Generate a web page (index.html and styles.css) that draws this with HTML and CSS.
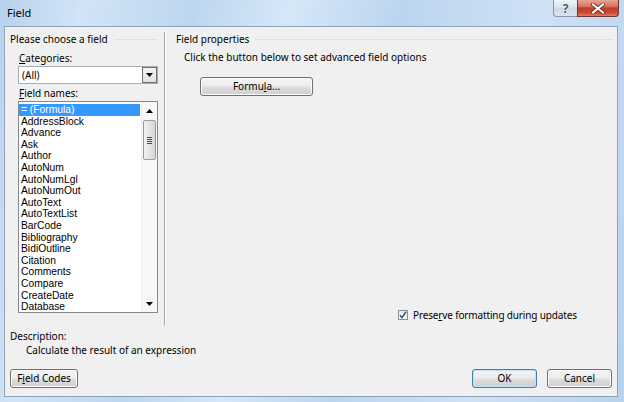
FILE: index.html
```html
<!DOCTYPE html>
<html>
<head>
<meta charset="utf-8">
<link rel="stylesheet" href="styles.css">
</head>
<body>
<div class="window">
  <div class="titlebar">
    <span class="title">Field</span>
    <div class="caption">
      <div class="cap-btn help"><span>?</span></div>
      <div class="cap-btn close">
        <svg width="14" height="11" viewBox="0 0 14 11"><path d="M2 1.5 L12 9.5 M12 1.5 L2 9.5" stroke="#5a2a22" stroke-width="3.6" stroke-linecap="square"/><path d="M2 1.5 L12 9.5 M12 1.5 L2 9.5" stroke="#ffffff" stroke-width="2" stroke-linecap="square"/></svg>
      </div>
    </div>
  </div>
  <div class="client">
    <div class="main">
      <div class="left">
        <div class="group-title">Please choose a field</div>
        <div class="label"><u>C</u>ategories:</div>
        <div class="select">
          <span class="select-text">(All)</span>
          <span class="drop"><svg width="7" height="4" viewBox="0 0 7 4"><path d="M0 0 H7 L3.5 4 Z" fill="#000"/></svg></span>
        </div>
        <div class="label"><u>F</u>ield names:</div>
        <div class="listbox">
          <ul class="items">
            <li class="selected">= (Formula)</li>
            <li>AddressBlock</li>
            <li>Advance</li>
            <li>Ask</li>
            <li>Author</li>
            <li>AutoNum</li>
            <li>AutoNumLgl</li>
            <li>AutoNumOut</li>
            <li>AutoText</li>
            <li>AutoTextList</li>
            <li>BarCode</li>
            <li>Bibliography</li>
            <li>BidiOutline</li>
            <li>Citation</li>
            <li>Comments</li>
            <li>Compare</li>
            <li>CreateDate</li>
            <li>Database</li>
          </ul>
          <div class="vscroll">
            <div class="sb-btn"><svg width="7" height="4" viewBox="0 0 7 4"><path d="M0 4 H7 L3.5 0 Z" fill="#000"/></svg></div>
            <div class="thumb"><span class="grip"></span><span class="grip"></span><span class="grip"></span><span class="grip"></span></div>
            <div class="sb-space"></div>
            <div class="sb-btn"><svg width="7" height="4" viewBox="0 0 7 4"><path d="M0 0 H7 L3.5 4 Z" fill="#000"/></svg></div>
          </div>
        </div>
      </div>
      <div class="sep"></div>
      <div class="right">
        <div class="group-title">Field properties</div>
        <div class="hint">Click the button below to set advanced field options</div>
        <button class="btn formula">Formu<u>l</u>a...</button>
        <div class="check-row">
          <span class="checkbox"><svg width="8" height="8" viewBox="0 0 8 8"><path d="M1 4.2 L3 6.6 L7 0.8" fill="none" stroke="#2f4f96" stroke-width="1.5"/></svg></span>
          <span class="check-label">Prese<u>r</u>ve formatting during updates</span>
        </div>
      </div>
    </div>
    <div class="desc-label">Description:</div>
    <div class="desc-text">Calculate the result of an expression</div>
    <div class="footer">
      <button class="btn codes">F<u>i</u>eld Codes</button>
      <button class="btn ok">OK</button>
      <button class="btn cancel">Cancel</button>
    </div>
  </div>
</div>
</body>
</html>
```
FILE: styles.css
```css
* { box-sizing: border-box; }
html, body { margin: 0; padding: 0; }
body {
  width: 624px;
  height: 402px;
  overflow: hidden;
  font-family: "Noto Sans", "Open Sans", sans-serif;
  font-size: 10px;
  color: #000;
}
.window {
  width: 624px;
  height: 402px;
  display: flex;
  flex-direction: column;
  background: linear-gradient(100deg, #b8d2ed 0%, #d2e4f6 12%, #bdd6ef 28%, #d6e7f8 42%, #bcd5ef 58%, #cfe1f5 78%, #b9d2ed 100%);
}
.titlebar {
  height: 26px;
  display: flex;
  align-items: flex-start;
}
.title {
  padding: 6px 0 0 7px;
  font-size: 11px;
  line-height: 14px;
}
.caption {
  margin-left: auto;
  margin-right: 5px;
  display: flex;
}
.cap-btn {
  height: 17px;
  display: flex;
  align-items: center;
  justify-content: center;
}
.help {
  width: 24px;
  border: 1px solid #8797ab;
  border-top: none;
  border-right: none;
  border-radius: 0 0 0 4px;
  background: linear-gradient(#eef4fa, #dce6f1 45%, #c9d7e7 50%, #d8e4f0);
  color: #4d5968;
  font-size: 12px;
  font-weight: bold;
  text-shadow: 0 0 2px #fff;
}
.close {
  width: 42px;
  border: 1px solid #6b3a35;
  border-top: none;
  border-radius: 0 0 4px 0;
  background: linear-gradient(#e7a493, #d77560 40%, #c23d25 50%, #cd4a31 80%, #e0806a);
}
.client {
  margin: 0 6px 5px 4px;
  flex: 1;
  background: #f0f0f0;
  border: 1px solid #8ea2ba;
  display: flex;
  flex-direction: column;
}
.main {
  height: 299px;
  display: flex;
}
.left {
  width: 159px;
  padding: 5px 6px 0 5px;
  display: flex;
  flex-direction: column;
}
.sep {
  width: 2px;
  margin-top: 5px;
  border-left: 1px solid #a8a8a8;
  border-right: 1px solid #ffffff;
}
.right {
  flex: 1;
  padding: 5px 4px 4px 10px;
  display: flex;
  flex-direction: column;
}
.group-title {
  display: flex;
  align-items: center;
  line-height: 14px;
  white-space: nowrap;
}
.group-title::after {
  content: "";
  flex: 1;
  height: 1px;
  margin-left: 6px;
  background: #dbe1e6;
}
.left .group-title::after { margin-right: 1px; }
.label {
  padding-left: 9px;
  line-height: 14px;
  margin-top: 5px;
}
.label + .listbox { margin-top: 1px; }
.select + .label { margin-top: 2px; }
.select {
  margin: 1px 0 0 8px;
  height: 18px;
  border: 1px solid #abadb3;
  background: #fff;
  display: flex;
  align-items: center;
}
.select-text {
  flex: 1;
  padding-left: 3px;
  line-height: 14px;
}
.drop {
  width: 15px;
  height: 16px;
  border: 1px solid #6f6f6f;
  background: linear-gradient(#f2f2f2, #e2e2e2);
  display: flex;
  align-items: center;
  justify-content: center;
}
.listbox {
  margin-left: 8px;
  height: 212px;
  border: 1px solid #828790;
  background: #fff;
  display: flex;
}
.items {
  flex: 1;
  list-style: none;
  margin: 0;
  padding: 2px 1px 0 0;
  overflow: hidden;
  font-family: "Liberation Sans", Arial, sans-serif;
  font-size: 10.3px;
}
.items li {
  line-height: 11.6px;
  height: 11.6px;
  padding-left: 2px;
  white-space: nowrap;
}
.items li.selected {
  background: #3399ff;
  color: #fff;
}
.vscroll {
  width: 16px;
  display: flex;
  flex-direction: column;
  padding: 0 1px 0 1px;
  background: #f7f7f7;
  border-left: 1px solid #f0f0f0;
}
.sb-btn {
  height: 17px;
  display: flex;
  align-items: center;
  justify-content: center;
}
.thumb {
  height: 40px;
  margin-top: 1px;
  border: 1px solid #9a9a9a;
  border-radius: 2px;
  background: linear-gradient(90deg, #f2f2f2, #e4e4e4 50%, #d6d6d6);
  display: flex;
  flex-direction: column;
  align-items: center;
  justify-content: center;
  gap: 1px;
}
.grip {
  width: 5px;
  height: 1px;
  background: #4d4d4d;
}
.sb-space { flex: 1; }
.hint {
  margin: 4px 0 0 8px;
  line-height: 14px;
}
.btn {
  font: inherit;
  color: #000;
  height: 19px;
  padding: 0;
  border: 1px solid #707070;
  border-radius: 3px;
  background: linear-gradient(#f3f3f3, #ececec 48%, #dddddd 52%, #d0d0d0);
  box-shadow: inset 0 0 0 1px #fbfbfb;
  line-height: 15px;
}
.formula {
  width: 113px;
  margin: 13px 0 0 24px;
  align-self: flex-start;
}
.check-row {
  margin: auto 0 0 222px;
  display: flex;
  align-items: center;
  line-height: 14px;
  white-space: nowrap;
}
.check-label { letter-spacing: -0.15px; }
.checkbox {
  width: 10px;
  height: 10px;
  margin-right: 5px;
  border: 1px solid #8e8f8f;
  background: linear-gradient(#e9e9e9, #fdfdfd);
  display: flex;
  align-items: center;
  justify-content: center;
}
.desc-label {
  margin-top: 3px;
  padding-left: 5px;
  line-height: 14px;
}
.desc-text {
  padding-left: 21px;
  line-height: 14px;
}
.footer {
  margin-top: 12px;
  padding: 0 5px;
  display: flex;
}
.codes { width: 68px; }
.ok {
  width: 65px;
  margin-left: auto;
  border-color: #3c7fb1;
  box-shadow: inset 0 0 0 1px #bfe4f8;
}
.cancel { width: 65px; margin-left: 10px; }
```
